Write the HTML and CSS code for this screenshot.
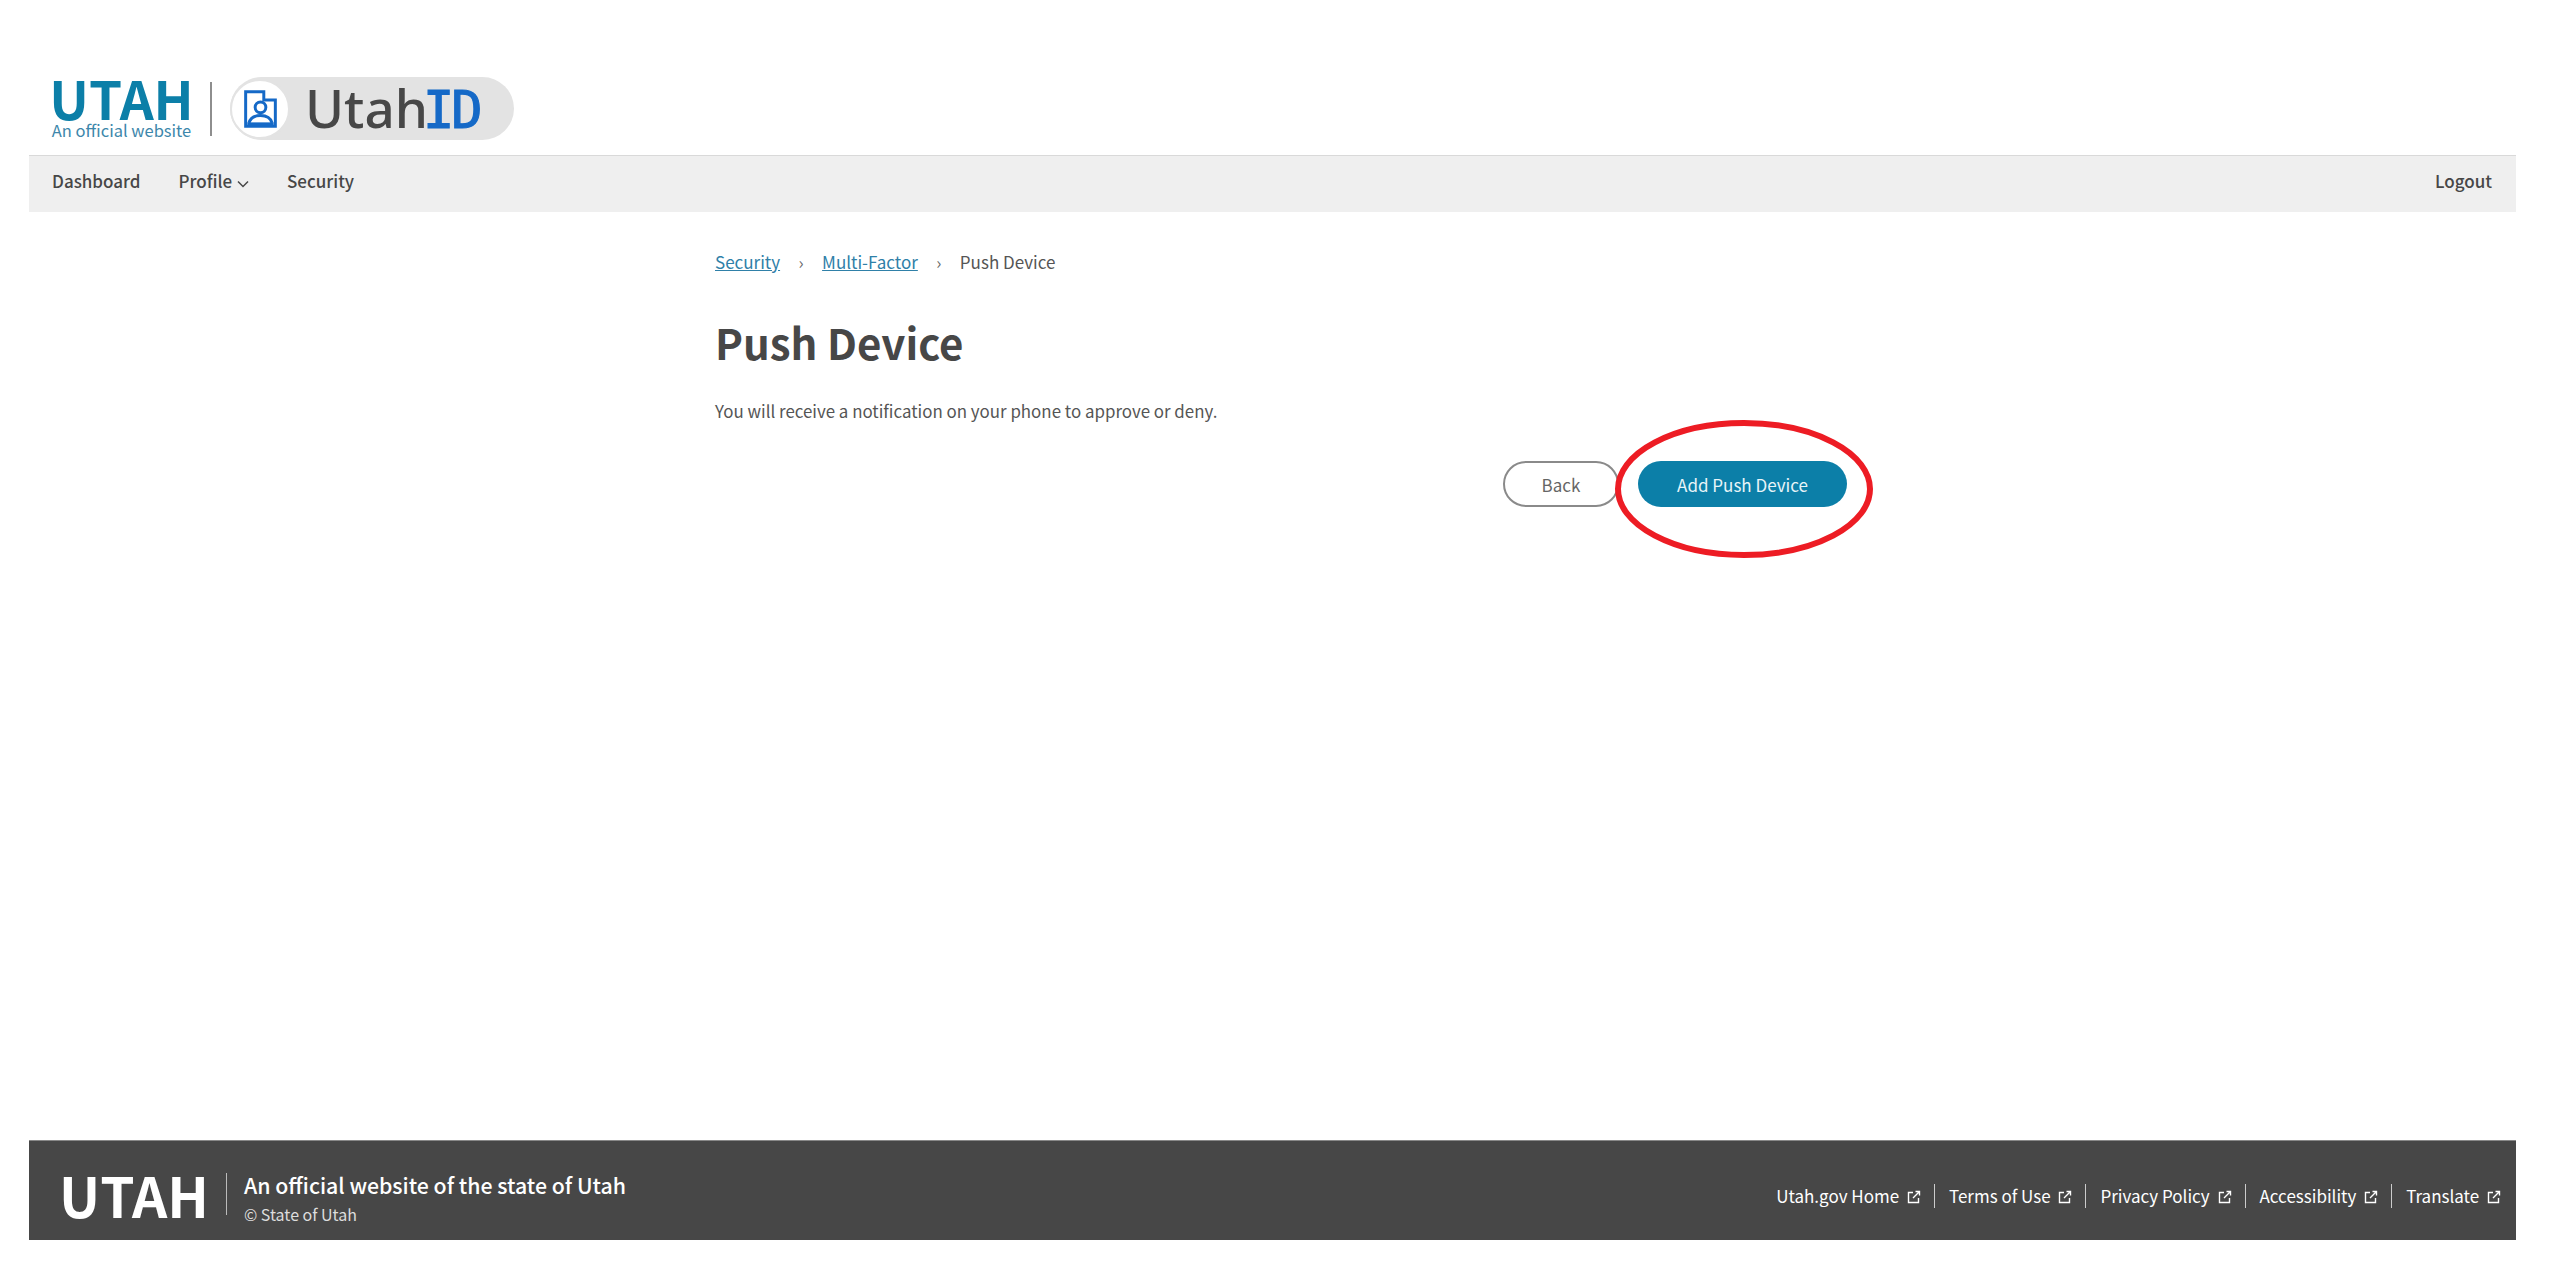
FILE: index.html

```html
<!DOCTYPE html>
<html lang="en">
<head>
  <meta charset="utf-8"/>
  <meta name="viewport" content="width=device-width, initial-scale=1.0"/>
  <title>Push Device – UtahID</title>
  <link rel="stylesheet" href="styles.css">
</head>
<body>
  <header class="site-header">
    <div class="state-logo">
      <div class="state-name">UTAH</div>
      <div class="state-sub">An official website</div>
    </div>
    <div class="logo-rule"></div>
    <div class="app-pill">
      <div class="app-badge">
        <svg class="app-icon" width="40" height="46" viewBox="0 0 40 46" fill="none" stroke="#1569c7" stroke-width="3.6">
          <path d="M2 2H24V12H38V44H2Z"/>
          <circle cx="20" cy="21" r="6.5"/>
          <path d="M6 40C8 33 14 31 20 31S32 33 34 40"/>
          <path d="M4 41H36"/>
        </svg>
      </div>
      <div class="app-name">Utah<span class="app-id">ID</span></div>
    </div>
  </header>

  <nav class="navbar">
    <a href="#">Dashboard</a>
    <a href="#" class="nav-profile">Profile
      <svg width="12" height="8" viewBox="0 0 12 8" fill="none" stroke="#474747" stroke-width="1.5"><path d="M1 1.5L6 6.5L11 1.5"/></svg>
    </a>
    <a href="#">Security</a>
    <a href="#" class="nav-logout">Logout</a>
  </nav>

  <main class="content">
    <div class="breadcrumb">
      <a href="#">Security</a><span class="crumb-sep">›</span><a href="#">Multi-Factor</a><span class="crumb-sep">›</span><span>Push Device</span>
    </div>
    <h1>Push Device</h1>
    <p class="intro">You will receive a notification on your phone to approve or deny.</p>
    <div class="actions">
      <button class="btn btn-back">Back</button>
      <button class="btn btn-primary">Add Push Device</button>
    </div>
  </main>

  <footer class="site-footer">
    <div class="footer-brand">
      <div class="footer-utah">UTAH</div>
      <div class="footer-rule"></div>
      <div class="footer-text">
        <div class="footer-title">An official website of the state of Utah</div>
        <div class="footer-copy">© State of Utah</div>
      </div>
    </div>
    <div class="footer-links">
      <a href="#">Utah.gov Home <svg class="ext" width="14" height="14" viewBox="0 0 14 14" fill="none" stroke="#fff" stroke-width="1.4"><path d="M6 2.5H1.5V12.5H11.5V8"/><path d="M6 8L12.5 1.5M8.5 1.5H12.5V5.5"/></svg></a>
      <a href="#">Terms of Use <svg class="ext" width="14" height="14" viewBox="0 0 14 14" fill="none" stroke="#fff" stroke-width="1.4"><path d="M6 2.5H1.5V12.5H11.5V8"/><path d="M6 8L12.5 1.5M8.5 1.5H12.5V5.5"/></svg></a>
      <a href="#">Privacy Policy <svg class="ext" width="14" height="14" viewBox="0 0 14 14" fill="none" stroke="#fff" stroke-width="1.4"><path d="M6 2.5H1.5V12.5H11.5V8"/><path d="M6 8L12.5 1.5M8.5 1.5H12.5V5.5"/></svg></a>
      <a href="#">Accessibility <svg class="ext" width="14" height="14" viewBox="0 0 14 14" fill="none" stroke="#fff" stroke-width="1.4"><path d="M6 2.5H1.5V12.5H11.5V8"/><path d="M6 8L12.5 1.5M8.5 1.5H12.5V5.5"/></svg></a>
      <a href="#">Translate <svg class="ext" width="14" height="14" viewBox="0 0 14 14" fill="none" stroke="#fff" stroke-width="1.4"><path d="M6 2.5H1.5V12.5H11.5V8"/><path d="M6 8L12.5 1.5M8.5 1.5H12.5V5.5"/></svg></a>
    </div>
  </footer>

  <!-- red marker drawn over the screenshot -->
  <svg class="marker" width="264" height="144" viewBox="0 0 264 144" fill="none">
    <ellipse cx="132" cy="72" rx="126" ry="66" stroke="#ed1c24" stroke-width="6"/>
  </svg>
</body>
</html>
```

FILE: styles.css

```css
* { box-sizing:border-box; }
html, body { height:100%; }
body { margin:0; padding:0 44px 46px 29px; background:#fff; color:#474747; font-family:"Noto Sans CJK SC", "Noto Sans", sans-serif; font-size:17px; display:flex; flex-direction:column; position:relative; overflow:hidden; }
a { color:inherit; text-decoration:none; }

.site-header { display:flex; align-items:center; height:155px; padding:77px 0 15px 23px; }
.state-logo { width:139px; display:flex; flex-direction:column; align-items:center; }
.state-name { font-weight:700; font-size:53px; line-height:40px; color:#0c7fa8; }
.state-sub { font-size:16.5px; line-height:20px; color:#3d87ab; margin-top:3px; white-space:nowrap; }
.logo-rule { width:2px; height:54px; background:#8e8e8e; margin:0 18px 0 19px; }
.app-pill { width:284px; height:63px; border-radius:32px; background:#e3e3e3; display:flex; align-items:center; }
.app-badge { width:60px; height:60px; border-radius:50%; background:#fff; display:flex; align-items:center; justify-content:center; border:2px solid #e3e3e3; flex:none; }
.app-icon { display:block; width:33px; height:38px; }
.app-name { font-family:"Noto Sans", sans-serif; font-weight:500; font-size:53px; line-height:62px; color:#474747; margin-left:15px; }
.app-id { font-family:"DejaVu Sans Mono", monospace; font-size:52px; color:#1569c7; letter-spacing:-3px; margin-left:-5px; -webkit-text-stroke:1.2px #1569c7; }

.navbar { height:57px; background:#efefef; border-top:1px solid #d9d9d9; display:flex; align-items:center; gap:38px; padding:0 24px 7px 23px; font-weight:500; }
.nav-profile svg { margin-left:1px; }
.nav-logout { margin-left:auto; }

.content { flex:1; width:1132px; margin-left:686px; padding-top:36px; color:#555; }
.breadcrumb { line-height:28px; display:flex; align-items:center; }
.breadcrumb a { color:#2f80a8; text-decoration:underline; }
.crumb-sep { width:42px; text-align:center; color:#666; }
h1 { margin:34px 0 0; font-size:42px; line-height:64px; font-weight:700; color:#474747; }
.intro { margin:23px 0 0; line-height:28px; font-size:16.9px; }
.actions { display:flex; justify-content:flex-end; gap:19px; margin-top:36px; }
.btn { height:46px; border-radius:23px; font:inherit; cursor:pointer; }
.btn-back { width:116px; background:#fff; border:2px solid #8a8a8a; color:#666; }
.btn-primary { width:209px; background:#0c7fa8; border:none; color:#e8f4f8; }

.site-footer { height:100px; background:#474747; border-top:1px solid #888; display:flex; align-items:center; justify-content:space-between; padding:8px 15px 0 30px; color:#fff; }
.footer-brand { display:flex; align-items:center; margin-top:-2px; }
.footer-utah { font-weight:700; font-size:55px; line-height:44px; }
.footer-rule { width:1px; height:42px; background:#bbb; margin:0 17px 0 17px; }
.footer-text { margin-top:8px; }
.footer-title { font-size:21.3px; line-height:30px; font-weight:500; }
.footer-copy { font-size:16px; line-height:24px; color:#ddd; margin-top:2px; }
.footer-links { display:flex; align-items:center; margin-top:2px; }
.footer-links a { font-size:17px; line-height:24px; padding:0 0 0 14px; margin-left:13px; border-left:1px solid #ccc; white-space:nowrap; }
.footer-links a:first-child { border-left:none; }
.ext { margin-left:4px; vertical-align:-1px; }

.marker { position:absolute; left:1612px; top:417px; }
```
